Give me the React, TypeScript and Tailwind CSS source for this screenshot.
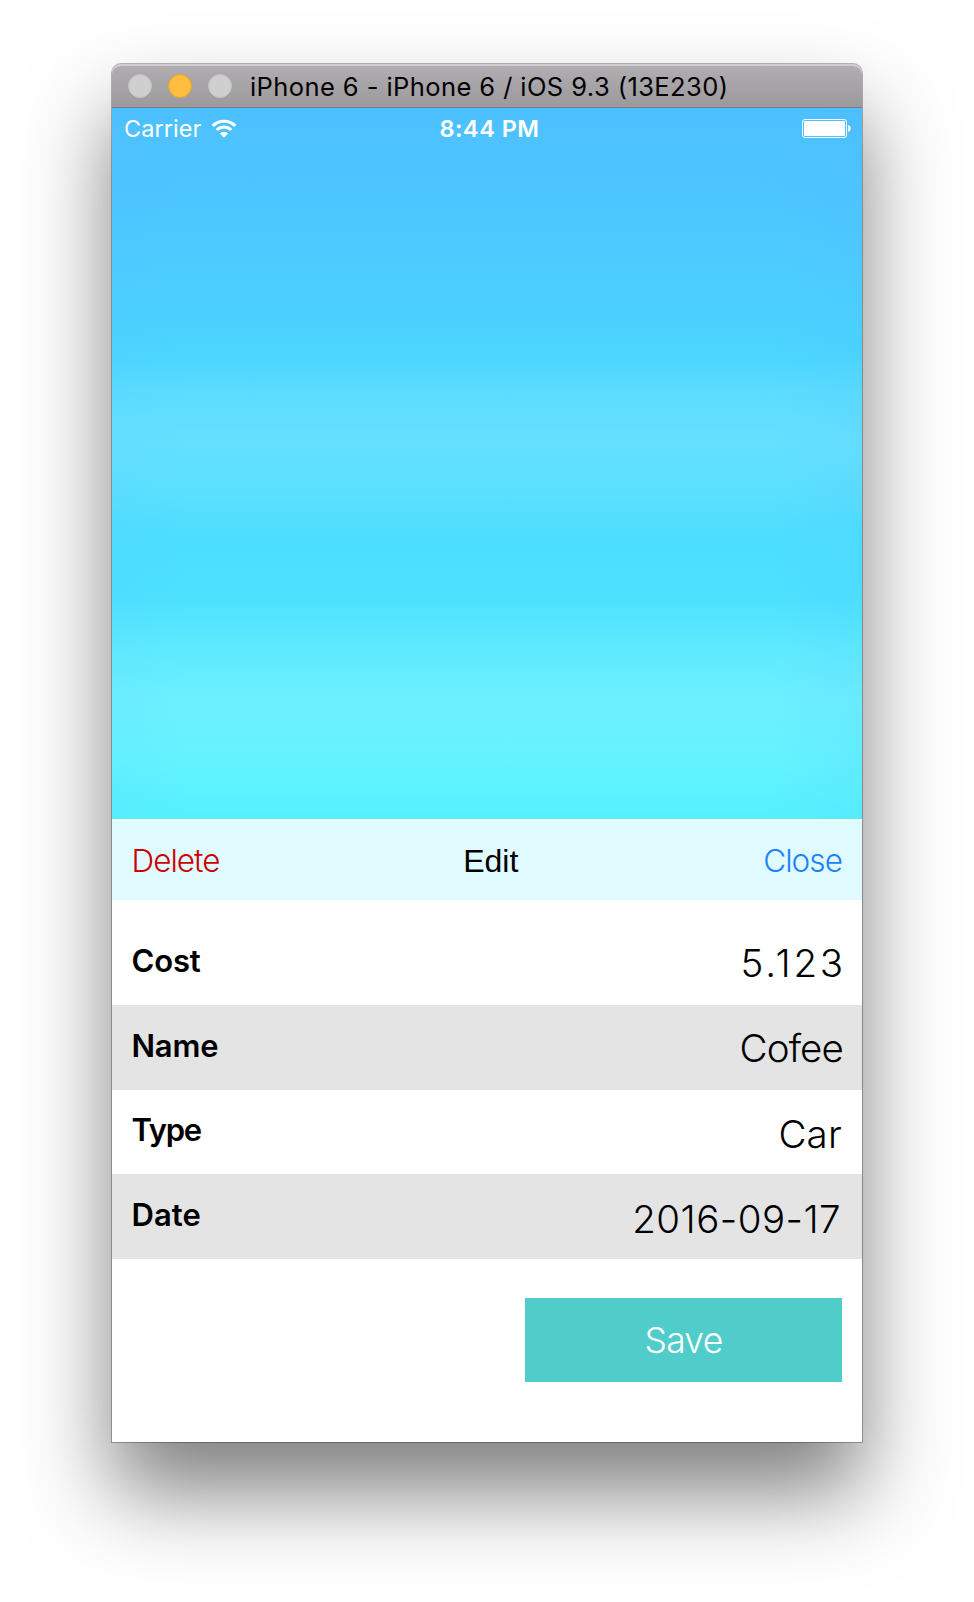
import React from "react";

function TitleBar() {
  return (
    <div className="flex h-[44px] shrink-0 items-center rounded-t-[9px] border-b border-[#7d7a7d] bg-linear-to-b from-[#b1aeb1] to-[#9d9a9d] pl-[16px] shadow-[inset_0_2px_0_#cfcdcf]">
      <span className="h-[24px] w-[24px] rounded-full border border-[#c4c2c4] bg-[#d0cfd0]" />
      <span className="ml-[16px] h-[24px] w-[24px] rounded-full border border-[#e8a12c] bg-[#ffbe40]" />
      <span className="ml-[16px] h-[24px] w-[24px] rounded-full border border-[#c4c2c4] bg-[#d0cfd0]" />
      <h1 className="ml-[18px] whitespace-nowrap pt-[2px] text-[25.5px] leading-none tracking-[0.42px] text-black">
        iPhone 6 - iPhone 6 / iOS 9.3 (13E230)
      </h1>
    </div>
  );
}

function WifiIcon() {
  return (
    <svg width="26" height="20" viewBox="0 0 26 20" fill="none" stroke="#fff" strokeWidth="3">
      <path d="M1.7 6.9a16 16 0 0 1 22.6 0" />
      <path d="M5.7 11a10.4 10.4 0 0 1 14.6 0" />
      <path d="M13 18.7l-4.1-4.2a5.9 5.9 0 0 1 8.2 0z" fill="#fff" stroke="none" />
    </svg>
  );
}

function Battery() {
  return (
    <svg width="50" height="20" viewBox="0 0 50 20" fill="none">
      <rect x="0.5" y="0.5" width="44" height="18" rx="2.5" stroke="#fff" />
      <rect x="2" y="2" width="41" height="15" rx="1" fill="#fff" />
      <path d="M46 6.2c3.6 0 3.6 6.6 0 6.6z" fill="#fff" />
    </svg>
  );
}

function StatusBar() {
  return (
    <div className="grid h-[41px] grid-cols-3 items-center pl-[12px] pr-[10px] text-[23.5px] leading-none text-white">
      <div className="flex items-center gap-[10px]">
        <span className="font-normal tracking-[0.05px]">Carrier</span>
        <WifiIcon />
      </div>
      <span className="pl-[3px] text-center font-semibold tracking-[0.5px]">8:44 PM</span>
      <div className="flex justify-end">
        <Battery />
      </div>
    </div>
  );
}

function Sky() {
  return (
    <div className="h-[711px] shrink-0 bg-[linear-gradient(90deg,rgba(80,180,255,0.05),rgba(80,180,255,0)_10%,rgba(80,180,255,0)_88%,rgba(76,170,255,0.08)),linear-gradient(180deg,#4dc0ff_0,#4dc6ff_90px,#4dcbff_150px,#4bd1ff_210px,#4cd6ff_250px,#5cdcff_285px,#65e0ff_335px,#5adfff_385px,#4ddeff_430px,#4de1ff_490px,#5eeaff_540px,#6cefff_590px,#64f2ff_650px,#55f1ff_711px)]">
      <StatusBar />
    </div>
  );
}

function Toolbar() {
  return (
    <div className="flex h-[81px] shrink-0 items-center justify-between border-t-2 border-[#f4ffff] bg-[#dffbff] pl-[19.5px] pr-[20px] text-[31.5px] leading-none">
      <button className="font-light tracking-[-1px] text-[#cc0000]">Delete</button>
      <h2 className="-ml-px font-['Liberation_Sans'] text-[32px] leading-none text-black">Edit</h2>
      <button className="font-light tracking-[-0.93px] text-[#1e82ff]">Close</button>
    </div>
  );
}

type RowProps = {
  label: string;
  value: string;
  rowClass: string;
  labelClass: string;
  valueClass: string;
};

const rows: RowProps[] = [
  {
    label: "Cost",
    value: "5.123",
    rowClass: "h-[105px] pt-[21px] bg-white",
    labelClass: "pb-[5px] tracking-[-0.15px]",
    valueClass: "pt-px -mr-[3px] tracking-[2.8px]",
  },
  {
    label: "Name",
    value: "Cofee",
    rowClass: "h-[85px] bg-[#e4e4e4]",
    labelClass: "pb-[4px] tracking-[-0.2px]",
    valueClass: "pt-px tracking-[-0.87px]",
  },
  {
    label: "Type",
    value: "Car",
    rowClass: "h-[84px] bg-white",
    labelClass: "pb-[5px] tracking-[-1.3px]",
    valueClass: "pt-[4px] mr-px tracking-[0.2px]",
  },
  {
    label: "Date",
    value: "2016-09-17",
    rowClass: "h-[85px] bg-[#e4e4e4]",
    labelClass: "pb-[4px] tracking-[0.05px]",
    valueClass: "pt-[5px] mr-[2px] tracking-[0.45px]",
  },
];

function Row({ label, value, rowClass, labelClass, valueClass }: RowProps) {
  return (
    <div className={`flex shrink-0 items-center justify-between pl-[19.5px] pr-[19px] leading-none text-black ${rowClass}`}>
      <span className={`text-[31px] leading-none font-[590] ${labelClass}`}>{label}</span>
      <span className={`text-[38.5px] leading-none font-light ${valueClass}`}>{value}</span>
    </div>
  );
}

export default function App() {
  return (
    <div className="flex h-[1602px] w-[974px] justify-center bg-white pt-[64px] font-['Inter','Liberation_Sans',sans-serif]">
      <div className="flex h-[1378px] w-[750px] flex-col rounded-t-[9px] bg-white shadow-[0_0_0_1px_rgba(0,0,0,0.28),0_50px_86px_rgba(0,0,0,0.5)]">
        <TitleBar />
        <Sky />
        <Toolbar />
        {rows.map((row) => (
          <Row key={row.label} {...row} />
        ))}
        <div className="flex justify-end pr-[20px] pt-[39px]">
          <button className="h-[84px] w-[317px] bg-[#50cdcb] pt-px text-[35.5px] leading-none font-light tracking-[-0.7px] text-white">
            Save
          </button>
        </div>
      </div>
    </div>
  );
}
